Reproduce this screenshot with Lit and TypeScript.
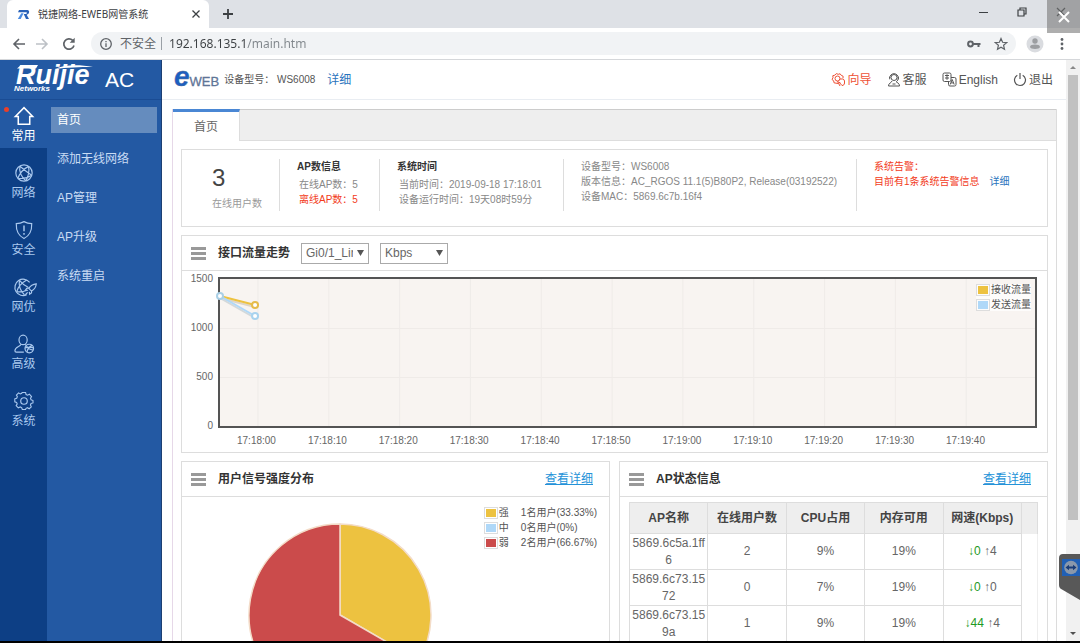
import { LitElement, html, css, svg } from "lit";
import { customElement } from "lit/decorators.js";
import { classMap } from "lit/directives/class-map.js";

const globe = svg`
  <circle cx="11" cy="11" r="9"/>
  <path d="M6.500 3.500C9.500 6 14.500 10 19.500 13.500M16 3.700C11.500 6 6.500 10.500 4.200 16.800M6.500 3.500C5.500 9 8 15 13 19.600M16 3.700C17 8 16 15 13 19.600M4.200 16.800C9 17.500 15 16.500 19.500 13.500"/>`;

const railIcons: Record<string, unknown> = {
  home: svg`<path d="M1.500 11.500 11 1.800l9.500 9.700h-3.200V20H4.700v-8.500z" stroke-width="1.700"/>`,
  globe,
  shield: svg`<path d="M11 1.800c3 1.700 5.700 2.200 8.500 2.200.3 8-2.300 13.200-8.500 16.400C4.800 17.200 2.200 12 2.500 4c2.800 0 5.500-.5 8.500-2.200z"/><path d="M11 6v6.500M11 14.300v2" stroke-width="1.600"/>`,
  optimize: svg`
    <path d="M17.200 6A9 9 0 1 0 14 19.500"/>
    <path d="M6 3.600C8 6 11.500 9.500 15.500 11.200M14 3.200C9 6 4.500 10.500 3 16M6 3.600C5 9 7 15 11.500 19.600M3 16c4 .7 7.500.2 10.500-1.200"/>
    <path d="M24.500 7.500c-4 .3-6.500 2-8.200 5l3 3c3-1.700 4.900-4 5.200-8zM16.500 12l-2.500.5-1.500 2 2.700.3M19.500 15l-.3 2.600-2 1.400-.3-2.700M15 17l-2.500 2.500"/>`,
  user: svg`
    <ellipse cx="10" cy="6.500" rx="4.500" ry="5.200"/>
    <path d="M7.500 11.200C7.500 14 1 13.500 1 18.500c0 1 .6 1.500 1.500 1.500h8.300M12.500 11.300l.5 1.200"/>
    <circle cx="16.800" cy="16" r="4.700"/><path d="M13.500 12.700c1.500 3 3.500 4.500 7.500 5M19.800 12.500c-3.500 1.500-5 4-5.500 7.500M12.200 15.200c3-1 6-1 9.200 0"/>`,
  gear: svg`<circle cx="11" cy="11" r="3.600"/><path d="M9 2h4l.6 2.400 1.700.8 2.200-1.100 2.500 2.700-1.200 2 .7 1.900 2.200.8v2.800l-2.300.7-.7 1.600 1 2.200-2.500 2.300-2-1.200-1.600.7L13 22H9.200l-.8-2.300-1.700-.7-2.200 1.100L2 17.500l1.200-2.100-.7-1.700L.4 13V9.500l2.200-.7.8-1.700L2.300 5l2.500-2.500 2 1.200 1.700-.7z" transform="translate(.5 -.3) scale(.94)"/>`,
};

const railItems = [
  { icon: "home", label: "常用" },
  { icon: "globe", label: "网络" },
  { icon: "shield", label: "安全" },
  { icon: "optimize", label: "网优" },
  { icon: "user", label: "高级" },
  { icon: "gear", label: "系统" },
];

const menuItems = ["首页", "添加无线网络", "AP管理", "AP升级", "系统重启"];

@customElement("browser-bar")
class BrowserBar extends LitElement {
  static styles = css`
    :host { display: block; flex: none; font-family: "Noto Sans", "Noto Sans CJK SC", sans-serif; }
    button { border: 0; padding: 0; background: none; color: inherit; display: flex; align-items: center; justify-content: center; }
    svg { display: block; fill: none; stroke: currentColor; }
    .strip { position: relative; display: flex; height: 28px; background: #dee1e6; padding-left: 7px; align-items: stretch; color: #3c4043; }
    .tab { display: flex; align-items: center; gap: 8px; width: 202px; box-sizing: border-box; padding: 0 8px 0 10px; background: #fff; border-radius: 6px 6px 0 0; font-size: 10px; }
    .title { flex: 1; white-space: nowrap; }
    .new { width: 38px; }
    .controls { margin-left: auto; display: flex; }
    .controls button { width: 39px; height: 24px; }
    .overlay { position: absolute; top: 0; right: 0; width: 33px; height: 33px; background: rgba(120, 120, 120, 0.6); color: #fff; z-index: 2; }
    .bar { display: flex; align-items: center; height: 32px; box-sizing: border-box; border-bottom: 1px solid #d5d7da; background: #fff; padding: 0 12px 0 10px; color: #5f6368; }
    .nav { width: 27px; height: 24px; }
    .nav.first { width: 18px; }
    .nav.off { color: #bdc1c6; }
    .omni { flex: 1; display: flex; align-items: center; height: 23px; margin: 0 10px 0 9px; padding: 0 8px; border-radius: 12px; background: #f1f3f5; font-size: 12px; gap: 7px; }
    .omni label { border-right: 1px solid #9aa0a6; padding-right: 5px; line-height: 13px; white-space: nowrap; }
    .omni input { flex: 1; min-width: 0; border: 0; outline: 0; padding: 0; font: 12px "Noto Sans", sans-serif; color: #444; background: linear-gradient(90deg, #3c4043 78px, #80868b 78px); background-clip: text; -webkit-background-clip: text; -webkit-text-fill-color: transparent; }
    .key { margin-right: 6px; }
    .more { width: 12px; margin-left: 12px; }
  `;
  render() {
    return html`
      <div class="strip">
        <div class="tab">
          <svg width="13" height="11" viewBox="0 0 13 11" stroke="none"><path d="M2 1h8.500c2.300 0 2.300 4-.8 4.700L12 10H9L6.700 5h2c1.300 0 1.700-1.800.5-1.800H1z" fill="#2a62b8" stroke="none"/><path d="M4.300 4.200h2.300L3.700 10H.8z" fill="#4b8be0" stroke="none"/></svg>
          <span class="title">锐捷网络-EWEB网管系统</span>
          <button aria-label="关闭标签页"><svg width="10" height="10" stroke-width="1.300"><path d="m1.500 1.500 7 7m0-7-7 7"/></svg></button>
        </div>
        <button class="new" aria-label="新标签页"><svg width="12" height="12" stroke-width="1.800"><path d="M6 1v10M1 6h10"/></svg></button>
        <div class="controls">
          <button aria-label="最小化"><svg width="10" height="10"><path d="M1 5.500h9"/></svg></button>
          <button aria-label="还原"><svg width="10" height="10" stroke-width="1.200"><path d="M1 3h6v6H1zM3 3V1h6v6H7"/></svg></button>
          <button aria-label="关闭"><svg width="10" height="10" stroke-width="1.200"><path d="m1 1 8 8m0-8-8 8"/></svg></button>
        </div>
        <button class="overlay" aria-label="退出全屏"><svg width="12" height="12" stroke-width="2"><path d="m1 1 10 10m0-10L1 11"/></svg></button>
      </div>
      <div class="bar">
        <button class="nav first" aria-label="后退"><svg width="14" height="12" stroke-width="1.600"><path d="M13 6H2m5-5L2 6l5 5"/></svg></button>
        <button class="nav off" aria-label="前进"><svg width="14" height="12" stroke-width="1.600"><path d="M1 6h11M7 1l5 5-5 5"/></svg></button>
        <button class="nav" aria-label="刷新"><svg width="14" height="14" stroke-width="1.700"><path d="M12 8.500A5.200 5.200 0 1 1 10.700 3.300"/><path d="M12.700.8v5H7.700z" fill="currentColor" stroke="none"/></svg></button>
        <div class="omni">
          <svg width="14" height="14" stroke-width="1.300"><circle cx="7" cy="7" r="5.300"/><path d="M7 6.200v3.800M7 4v1.300"/></svg>
          <label for="url">不安全</label>
          <input id="url" value="192.168.135.1/main.htm" />
          <svg class="key" width="14" height="8"><circle cx="3.500" cy="4" r="2.400" stroke-width="2"/><path d="M6 4h7.500M11.500 4v3" stroke-width="2"/></svg>
          <svg width="14" height="14" viewBox="0 0 14 14" stroke-width="1.200"><path d="m7 1.500 1.600 3.800 4.100.3-3.100 2.700.9 4L7 10.200l-3.500 2.100.9-4-3.100-2.700 4.100-.3z"/></svg>
        </div>
        <svg width="18" height="18" stroke="none"><circle cx="9" cy="9" r="8.500" fill="#dadce0" stroke="none"/><circle cx="9" cy="6" r="2.700" fill="#9c9ea1" stroke="none"/><path d="M4 12c0-3.200 10-3.200 10 0 0 2.500-10 2.500-10 0z" fill="#9c9ea1" stroke="none"/></svg>
        <button class="more" aria-label="菜单"><svg width="4" height="14" stroke="none"><g fill="#5f6368" stroke="none"><circle cx="2" cy="2.500" r="1.400"/><circle cx="2" cy="7" r="1.400"/><circle cx="2" cy="11.500" r="1.400"/></g></svg></button>
      </div>`;
  }
}

@customElement("side-nav")
class SideNav extends LitElement {
  static styles = css`
    :host { display: flex; flex-direction: column; flex: none; width: 162px; box-sizing: border-box; background: #2359a3; border-right: 1px solid #1c3f73; font: 12px/16px "Liberation Sans", "Noto Sans CJK SC", sans-serif; }
    a { color: inherit; text-decoration: none; }
    .brand { display: flex; gap: 12px; height: 39px; flex: none; border-bottom: 1px solid #1a4c94; padding-left: 14px; color: #fff; align-items: center; }
    .logo { position: relative; width: 79px; font-style: italic; font-weight: bold; }
    .logo strong { display: block; font-size: 27px; line-height: 19px; padding-left: 2px; }
    .logo small { display: block; font-size: 8px; line-height: 8px; }
    .swoosh { position: absolute; left: 3px; top: -1px; }
    .ac { font-size: 21px; line-height: 24px; }
    .cols { flex: 1; display: flex; min-height: 0; }
    .rail { width: 47px; background: #0d3f85; color: #a9c8ee; display: flex; flex-direction: column; gap: 9px; }
    .entry { position: relative; height: 48px; box-sizing: border-box; padding-top: 5px; display: flex; flex-direction: column; align-items: center; gap: 1px; }
    .entry.on { background: #2359a3; color: #fff; }
    .entry svg { display: block; fill: none; stroke: currentColor; stroke-width: 1.300; overflow: visible; }
    .dot { position: absolute; left: 4px; top: 7px; width: 5px; height: 5px; border-radius: 50%; background: #e8402a; }
    .menu { flex: 1; display: flex; flex-direction: column; gap: 13px; padding: 7px 4px; color: #c9dcf4; }
    .menu a { line-height: 26px; padding-left: 6px; }
    .menu .on { background: #658cbe; color: #fff; }
  `;
  render() {
    return html`
      <div class="brand">
        <div class="logo"><strong>Ruijie</strong><small>Networks</small>
          <svg class="swoosh" width="76" height="22" viewBox="0 0 76 22"><path d="M0 3.500 4 0h17l-2 3.500zM38 4C48-.5 62-.5 76 2 62 2 50 2.500 38 4z" fill="#fff"/></svg>
        </div>
        <span class="ac">AC</span>
      </div>
      <div class="cols">
        <nav class="rail">
          ${railItems.map((item, i) => html`<a href="#" class=${classMap({ entry: true, on: i === 0 })}>
            ${i === 0 ? html`<span class="dot"></span>` : ""}
            <svg width="20" height="22" viewBox="0 0 22 22">${railIcons[item.icon]}</svg>
            <span>${item.label}</span></a>`)}
        </nav>
        <nav class="menu">
          ${menuItems.map((label, i) => html`<a href="#" class=${classMap({ on: i === 0 })}>${label}</a>`)}
        </nav>
      </div>`;
  }
}

@customElement("top-header")
class TopHeader extends LitElement {
  static styles = css`
    :host { display: flex; align-items: center; height: 40px; flex: none; box-sizing: border-box; border-bottom: 1px solid #e9edf2; padding: 0 13px 0 12px; color: #555; font: 12px/16px "Liberation Sans", "Noto Sans CJK SC", sans-serif; white-space: nowrap; }
    a { color: inherit; text-decoration: none; }
    .logo { display: flex; align-items: baseline; color: #5f7597; font: 13px/24px "Liberation Sans", sans-serif; -webkit-text-stroke: 0.3px #5f7597; }
    .logo b { color: #1d5fc0; font: italic bold 28px/24px "Liberation Sans", sans-serif; }
    .model { font-size: 10px; padding: 0 12px 0 5px; }
    .more { color: #2a73bd; }
    .links { margin-left: auto; display: flex; gap: 15px; }
    .links a { display: flex; align-items: center; gap: 2px; }
    .links .hot { color: #ee5136; }
    svg { display: block; fill: none; stroke: currentColor; }
  `;
  render() {
    return html`
      <span class="logo"><b>e</b>WEB</span>
      <span class="model">设备型号： WS6008</span>
      <a class="more" href="#">详细</a>
      <nav class="links">
        <a class="hot" href="#"><svg width="15" height="15"><path d="M7 11.500 3 10.800l-.3-2L1 7.500l1-1.800-.2-2 2-.5L5.300 1.600l1.900.7 1.900-.5 1.200 1.600 1.800.8-.1 2"/><circle cx="6.500" cy="6.500" r="2.500"/><path d="M8 7.500c2-1 5.500-.8 5.500 1.500v2c0 1.500-1 2.500-2.500 2.500L8.800 11M9 14l-2.500-4.500 3 1.500"/></svg>向导</a>
        <a href="#"><svg width="14" height="15"><circle cx="7" cy="5.500" r="3"/><path d="M2.700 6a4.300 4.300 0 1 1 8.600 0c0 1.500-.8 3-2 3.800M2.700 4.800v2.500M11.300 4.800v2.500M5 9C4.500 11 1.500 10.800 1.500 14h11c0-3-2.500-3.200-3.500-4.500M5.500 12h3"/></svg>客服</a>
        <a href="#"><svg width="15" height="15"><rect x="1" y="1" width="8" height="8.500" rx="1.500"/><path d="M3 3.500h4M5 2.300v5.500M3 6h4"/><path d="M9 5.500h3.500A1.500 1.500 0 0 1 14 7v5.500a1.500 1.500 0 0 1-1.500 1.500H8a1.500 1.500 0 0 1-1.500-1.500v-3M8.200 12.500l2-5 2 5M9 10.900h2.500"/></svg>English</a>
        <a href="#"><svg width="14" height="15" stroke-width="1.200"><path d="M4.300 3.200a5.500 5.500 0 1 0 5.400 0M7 1v6"/></svg>退出</a>
      </nav>`;
  }
}

const panelStyles = css`
  * { box-sizing: border-box; }
  :host { display: block; font: 12px/16px "Liberation Sans", "Noto Sans CJK SC", sans-serif; color: #666; }
  .panel { background: #fff; border: 1px solid #ddd; height: 100%; }
  .head { display: flex; align-items: center; height: 35px; border-bottom: 1px solid #ddd; padding: 0 16px 0 9px; }
  .bars { width: 15px; height: 13px; margin-right: 12px; border-top: 3px solid #999; border-bottom: 3px solid #999; display: flex; align-items: center; }
  .bars::after { content: ""; height: 3px; width: 100%; background: #999; }
  h2 { margin: 0; font-size: 12px; line-height: 16px; color: #333; white-space: nowrap; }
  .more { margin-left: auto; color: #2492d8; }
  .swatch { width: 14px; height: 12px; border: 1px solid #ddd; padding: 1px; background-clip: content-box; }
  .yellow { background-color: #edc240; }
  .blue { background-color: #afd8f8; }
  .red { background-color: #cb4b4b; }
`;

@customElement("status-summary")
class StatusSummary extends LitElement {
  static styles = [panelStyles, css`
    .panel { display: grid; grid-template-columns: 98fr 100fr 184fr 293fr 190fr; height: 78px; padding: 9px 0 17px; font-size: 10px; line-height: 15px; white-space: nowrap; }
    section { border-right: 1px solid #ddd; padding-left: 17px; color: #888; }
    section:last-child { border-right: 0; }
    .users { padding-left: 30px; color: #999; }
    .count { display: block; font-size: 24px; line-height: 37px; color: #444; }
    h3 { margin: 0 0 3px; font-size: 10px; line-height: 15px; color: #333; }
    p { margin: 0; }
    .inset { padding-left: 2px; }
    .alert { color: #f23c1c; }
    .alert a { color: #2a73bd; text-decoration: none; margin-left: 10px; }
  `];
  render() {
    return html`<div class="panel">
      <section class="users"><span class="count">3</span>在线用户数</section>
      <section><h3>AP数信息</h3><p class="inset">在线AP数：5</p><p class="inset alert">离线AP数：5</p></section>
      <section><h3>系统时间</h3><p class="inset">当前时间：2019-09-18 17:18:01</p><p class="inset">设备运行时间：19天08时59分</p></section>
      <section><p>设备型号：WS6008</p><p>版本信息：AC_RGOS 11.1(5)B80P2, Release(03192522)</p><p>设备MAC：5869.6c7b.16f4</p></section>
      <section class="alert"><p>系统告警：</p><p>目前有1条系统告警信息<a href="#">详细</a></p></section>
    </div>`;
  }
}

const ticks = ["17:18:00", "17:18:10", "17:18:20", "17:18:30", "17:18:40", "17:18:50", "17:19:00", "17:19:10", "17:19:20", "17:19:30", "17:19:40"];
const TICK_STEP = 8.69;
const FIRST_TICK = 4.66;

@customElement("traffic-chart")
class TrafficChart extends LitElement {
  static styles = [panelStyles, css`
    .pick { position: relative; margin-left: 11px; }
    .pick select { appearance: none; display: block; width: 68px; height: 21px; border: 1px solid #aaa; border-radius: 0; background: #fff; color: #666; padding: 0 15px 0 4px; font: 12px "Liberation Sans", sans-serif; }
    .pick svg { position: absolute; right: 5px; top: 7px; pointer-events: none; }
    .chart { display: grid; grid-template-columns: 36px 1fr; padding: 6px 10px 5px 0; font-size: 10px; line-height: 12px; }
    .values { display: flex; flex-direction: column; justify-content: space-between; text-align: right; padding-right: 5px; margin: -4px 0; }
    .plot { position: relative; height: 151px; border: 2px solid #545454; background: #f8f4f1; }
    .plot > svg { display: block; overflow: visible; }
    .legend { position: absolute; top: 5px; right: 4px; display: grid; grid-template-columns: 14px auto; row-gap: 3px; column-gap: 1px; background: rgba(255, 255, 255, 0.7); color: #545454; }
    .times { grid-column: 2; display: flex; padding: 7px 0 0 3px; }
    .times span { flex: 0 0 8.69%; text-align: center; }
  `];
  render() {
    return html`<div class="panel">
      <div class="head">
        <span class="bars"></span><h2>接口流量走势</h2>
        <span class="pick"><select aria-label="接口"><option>Gi0/1_Link</option></select><svg width="7" height="6"><path d="M0 0h7L3.500 6z" fill="#555"/></svg></span>
        <span class="pick"><select aria-label="单位"><option>Kbps</option></select><svg width="7" height="6"><path d="M0 0h7L3.500 6z" fill="#555"/></svg></span>
      </div>
      <div class="chart">
        <div class="values"><span>1500</span><span>1000</span><span>500</span><span>0</span></div>
        <div class="plot">
          <svg width="100%" height="147">
            <g stroke="#efebe8">
              ${ticks.map((_, i) => svg`<line x1="${FIRST_TICK + i * TICK_STEP}%" x2="${FIRST_TICK + i * TICK_STEP}%" y1="0" y2="147"/>`)}
              <line x1="0" x2="100%" y1="49.500" y2="49.500"/><line x1="0" x2="100%" y1="98.500" y2="98.500"/>
            </g>
            <g stroke-width="2">
              <line x1="0" y1="19" x2="4.3%" y2="28" stroke="#ddd5c8"/>
              <line x1="0" y1="17" x2="4.3%" y2="26" stroke="#edc240"/>
              <line x1="0" y1="19" x2="4.3%" y2="39" stroke="#d3d8da"/>
              <line x1="0" y1="17" x2="4.3%" y2="37" stroke="#afd8f8"/>
            </g>
            <g fill="#fff" stroke-width="2">
              <circle cx="4.3%" cy="26" r="3" stroke="#e5bb4a"/>
              <circle cx="0" cy="17" r="3" stroke="#a9cfe6"/>
              <circle cx="4.3%" cy="37" r="3" stroke="#a9d3ee"/>
            </g>
          </svg>
          <div class="legend">
            <span class="swatch yellow"></span><span>接收流量</span>
            <span class="swatch blue"></span><span>发送流量</span>
          </div>
        </div>
        <div class="times">${ticks.map((t) => html`<span>${t}</span>`)}</div>
      </div>
    </div>`;
  }
}

@customElement("signal-panel")
class SignalPanel extends LitElement {
  static styles = [panelStyles, css`
    .body { display: flex; align-items: flex-start; padding: 10px 12px 16px 14px; }
    .pie { flex: 1; display: flex; justify-content: center; padding-top: 16px; }
    .legend { display: grid; grid-template-columns: 14px 21px auto; column-gap: 1px; row-gap: 3px; font-size: 10px; line-height: 12px; color: #545454; white-space: nowrap; }
  `];
  render() {
    return html`<div class="panel">
      <div class="head"><span class="bars"></span><h2>用户信号强度分布</h2><a class="more" href="#">查看详细</a></div>
      <div class="body">
        <div class="pie"><svg width="184" height="184" viewBox="-92 -92 184 184">
          <g stroke="#f3dcc8" stroke-width="1.500">
            <path d="M0 0V-91A91 91 0 0 1 78.800 45.500z" fill="#edc240"/>
            <path d="M0 0 78.800 45.500A91 91 0 1 1 0-91z" fill="#cb4b4b"/>
          </g></svg></div>
        <div class="legend">
          <span class="swatch yellow"></span><span>强</span><span>1名用户(33.33%)</span>
          <span class="swatch blue"></span><span>中</span><span>0名用户(0%)</span>
          <span class="swatch red"></span><span>弱</span><span>2名用户(66.67%)</span>
        </div>
      </div>
    </div>`;
  }
}

const accessPoints = [
  { name: "5869.6c5a.1ff6", users: 2, cpu: "9%", mem: "19%", down: 0, up: 4 },
  { name: "5869.6c73.1572", users: 0, cpu: "7%", mem: "19%", down: 0, up: 0 },
  { name: "5869.6c73.159a", users: 1, cpu: "9%", mem: "19%", down: 44, up: 4 },
];

@customElement("ap-panel")
class ApPanel extends LitElement {
  static styles = [panelStyles, css`
    .body { padding: 5px 9px; }
    table { width: 100%; table-layout: fixed; border-collapse: collapse; border-right: 1px solid #eee; line-height: 17px; text-align: center; }
    th { height: 31px; padding: 0; background: #eee; color: #444; border: 1px solid #ddd; border-bottom: 0; white-space: nowrap; }
    td { height: 36px; padding: 0 2px; border: 1px solid #ddd; word-break: break-all; }
    td.gutter { border: 0; }
    .gutter { width: 16px; }
    .down { color: #1f9a24; }
  `];
  render() {
    return html`<div class="panel">
      <div class="head"><span class="bars"></span><h2>AP状态信息</h2><a class="more" href="#">查看详细</a></div>
      <div class="body"><table>
        <thead><tr><th>AP名称</th><th>在线用户数</th><th>CPU占用</th><th>内存可用</th><th>网速(Kbps)</th><th class="gutter"></th></tr></thead>
        <tbody>${accessPoints.map((ap) => html`<tr>
          <td>${ap.name}</td><td>${ap.users}</td><td>${ap.cpu}</td><td>${ap.mem}</td>
          <td><span class="down">↓${ap.down}</span> ↑${ap.up}</td><td class="gutter"></td></tr>`)}
        </tbody>
      </table></div>
    </div>`;
  }
}

@customElement("app-root")
class AppRoot extends LitElement {
  static styles = css`
    * { box-sizing: border-box; }
    :host { display: flex; flex-direction: column; height: 100vh; box-sizing: border-box; overflow: hidden; position: relative; background: #fff; border-bottom: 2px solid #000; font: 12px/16px "Liberation Sans", "Noto Sans CJK SC", sans-serif; color: #666; }
    .page { flex: 1; display: flex; min-height: 0; }
    main { flex: 1; min-width: 0; display: flex; flex-direction: column; }
    .scroll { flex: 1; min-height: 0; overflow: hidden; padding: 9px 9px 0 10px; }
    .frame { border: 1px solid #dcdcdc; border-left-color: #e6d8e8; border-top: 0; }
    .tabs { display: flex; height: 32px; background: #eee; border-top: 1px solid #ccc; border-bottom: 1px solid #ddd; }
    .tab { margin: -1px 0; width: 67px; background: #fff; border: 0; border-top: 3px solid #4a87d4; border-right: 1px solid #ddd; color: #666; font: inherit; padding: 0; }
    .content { display: grid; grid-template-columns: 1fr 1fr; gap: 8px 9px; padding: 8px; }
    .wide { grid-column: 1 / -1; }
    .track { flex: none; width: 14px; background: #f1f1f1; display: flex; flex-direction: column; align-items: center; padding: 5px 0; }
    .thumb { width: 10px; margin: 5px 0 auto; height: 78%; background: #c1c1c1; }
    .remote { position: absolute; right: 0; top: 554px; width: 21px; height: 46px; padding: 0; border: 0; background: none; }
    svg { display: block; }
  `;
  render() {
    return html`
      <browser-bar></browser-bar>
      <div class="page">
        <side-nav></side-nav>
        <main>
          <top-header></top-header>
          <div class="scroll"><div class="frame">
            <div class="tabs"><button class="tab">首页</button></div>
            <div class="content">
              <status-summary class="wide"></status-summary>
              <traffic-chart class="wide"></traffic-chart>
              <signal-panel></signal-panel>
              <ap-panel></ap-panel>
            </div>
          </div></div>
        </main>
        <div class="track">
          <svg width="8" height="5"><path d="M4 1l3 3H1z" fill="#888"/></svg>
          <div class="thumb"></div>
          <svg width="8" height="5"><path d="M4 4l3-3H1z" fill="#505050"/></svg>
        </div>
      </div>
      <button class="remote" aria-label="远程控制"><svg width="21" height="46"><path d="M4 0h17v46L3 35.500Q0 34 0 31V4q0-4 4-4z" fill="#585858"/><path d="M3 5h18v17H3z" fill="#2160b5"/><circle cx="12" cy="13.500" r="6.800" fill="#8a98ab"/><path d="m6.500 13.500 3.500-2.700v1.700h4v-1.700l3.500 2.700-3.500 2.700v-1.700h-4v1.700z" fill="#1b3d78"/></svg></button>`;
  }
}
